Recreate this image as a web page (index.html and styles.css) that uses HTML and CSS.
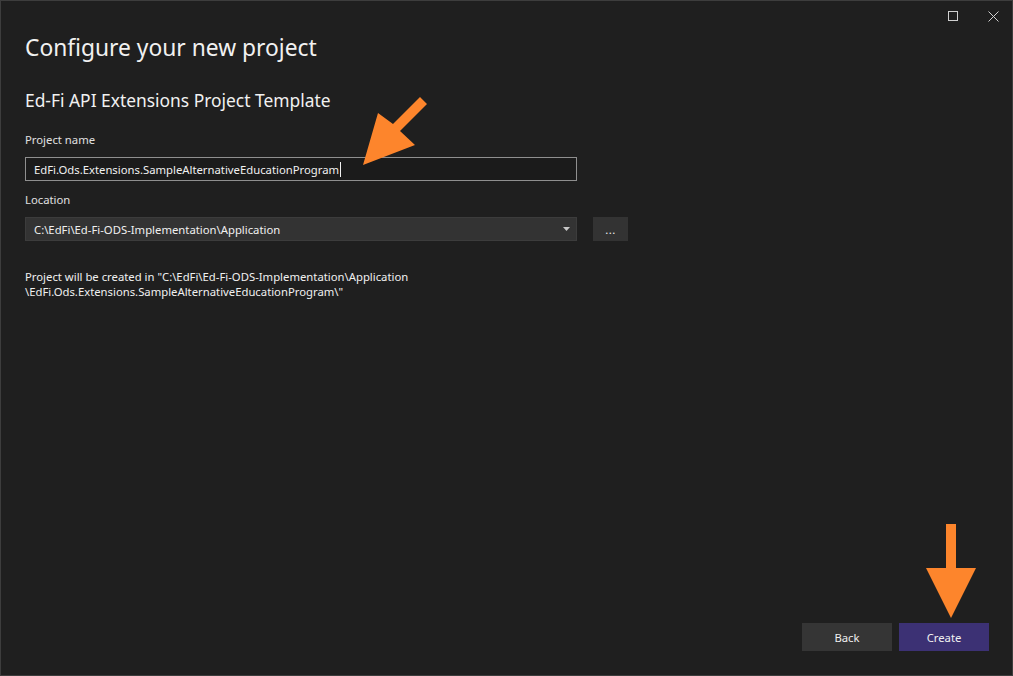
FILE: index.html
```html
<!DOCTYPE html>
<html lang="en">
<head>
<meta charset="utf-8">
<title>Configure your new project</title>
<link rel="stylesheet" href="styles.css">
</head>
<body>
<div class="window">
  <div class="titlebar">
    <span class="ctl max" aria-label="Maximize"><svg width="10" height="10" viewBox="0 0 10 10"><rect x="0.5" y="0.5" width="9" height="9" fill="none" stroke="#d0d0d0" stroke-width="1"/></svg></span>
    <span class="ctl close" aria-label="Close"><svg width="11" height="11" viewBox="0 0 11 11"><path d="M0.5 0.5 L10.5 10.5 M10.5 0.5 L0.5 10.5" stroke="#d0d0d0" stroke-width="1"/></svg></span>
  </div>
  <div class="content">
    <h1 class="title">Configure your new project</h1>
    <h2 class="subtitle">Ed-Fi API Extensions Project Template</h2>
    <div class="field first">
      <label class="label">Project name</label>
      <div class="input"><span>EdFi.Ods.Extensions.SampleAlternativeEducationProgram</span><span class="caret"></span></div>
    </div>
    <div class="field second">
      <label class="label">Location</label>
      <div class="row">
        <div class="select"><span>C:\EdFi\Ed-Fi-ODS-Implementation\Application</span><svg class="dd" width="7" height="4" viewBox="0 0 7 4"><path d="M0 0 H7 L3.5 4 Z" fill="#c8c8c8"/></svg></div>
        <div class="browse">...</div>
      </div>
    </div>
    <p class="info">Project will be created in "C:\EdFi\Ed-Fi-ODS-Implementation\Application<br>\EdFi.Ods.Extensions.SampleAlternativeEducationProgram\"</p>
  </div>
  <div class="footer">
    <button class="btn back">Back</button>
    <button class="btn create">Create</button>
  </div>
  <svg class="annotations" width="1013" height="676" viewBox="0 0 1013 676">
    <path d="M427 104 L420 97 L393 124 L378 113 L363 165 L415 145 L400 131 Z" fill="#fd852c"/>
    <path d="M946 524 H956 V568 H976 L951 618 L926 568 H946 Z" fill="#fd852c"/>
  </svg>
</div>
</body>
</html>
```

FILE: styles.css
```css
* { box-sizing: border-box; }
html, body { margin: 0; padding: 0; }
body {
  width: 1013px;
  height: 676px;
  background: #1f1f1f;
  font-family: "Noto Sans", "Open Sans", sans-serif;
  color: #e6e6e6;
  overflow: hidden;
}
.window {
  position: relative;
  width: 1013px;
  height: 676px;
  border: 1px solid #3d3d3d;
  background: #1f1f1f;
  display: flex;
  flex-direction: column;
}
.titlebar {
  height: 32px;
  display: flex;
  justify-content: flex-end;
  align-items: flex-start;
  padding-top: 10px;
  padding-right: 13px;
  gap: 29px;
}
.ctl { display: block; width: 11px; height: 11px; }
.ctl svg { display: block; }
.content {
  padding: 0 24px;
  flex: 1;
}
.title {
  margin: 0;
  font-size: 22.8px;
  font-weight: 400;
  color: #f1f1f1;
  line-height: 30px;
}
.subtitle {
  margin: 25px 0 0 0;
  font-size: 17.4px;
  font-weight: 400;
  color: #f1f1f1;
  line-height: 24px;
}
.field.first { margin-top: 20px; }
.field.second { margin-top: 11px; }
.label {
  display: block;
  font-size: 11.3px;
  line-height: 16px;
  color: #e0e0e0;
  margin-bottom: 9px;
}
.input {
  width: 552px;
  height: 24px;
  border: 1px solid #8f8f8f;
  background: #1b1b1b;
  display: flex;
  align-items: center;
  padding-left: 8px;
  font-size: 11.3px;
  color: #f0f0f0;
}
.caret {
  display: inline-block;
  width: 1px;
  height: 15px;
  background: #f0f0f0;
  margin-left: 1px;
}
.row { display: flex; gap: 16px; }
.select {
  width: 552px;
  height: 24px;
  background: #333333;
  border: 1px solid #3c3c3c;
  display: flex;
  align-items: center;
  justify-content: space-between;
  padding: 0 6px 0 8px;
  font-size: 11.3px;
  color: #f0f0f0;
}
.dd { display: block; }
.browse {
  width: 35px;
  height: 24px;
  background: #333333;
  color: #f0f0f0;
  font-size: 11.3px;
  display: flex;
  align-items: center;
  justify-content: center;
  letter-spacing: 0.5px;
}
.info {
  margin: 28px 0 0 0;
  font-size: 11.3px;
  line-height: 15px;
  color: #f0f0f0;
}
.footer {
  display: flex;
  justify-content: flex-end;
  gap: 7px;
  padding: 0 23px 24px 0;
}
.btn {
  width: 90px;
  height: 28px;
  border: none;
  font-family: inherit;
  font-size: 11.3px;
  color: #f0f0f0;
  padding: 0;
}
.back { background: #353535; }
.create { background: #3c3174; }
.annotations {
  position: absolute;
  left: -1px;
  top: -1px;
  pointer-events: none;
}
```
